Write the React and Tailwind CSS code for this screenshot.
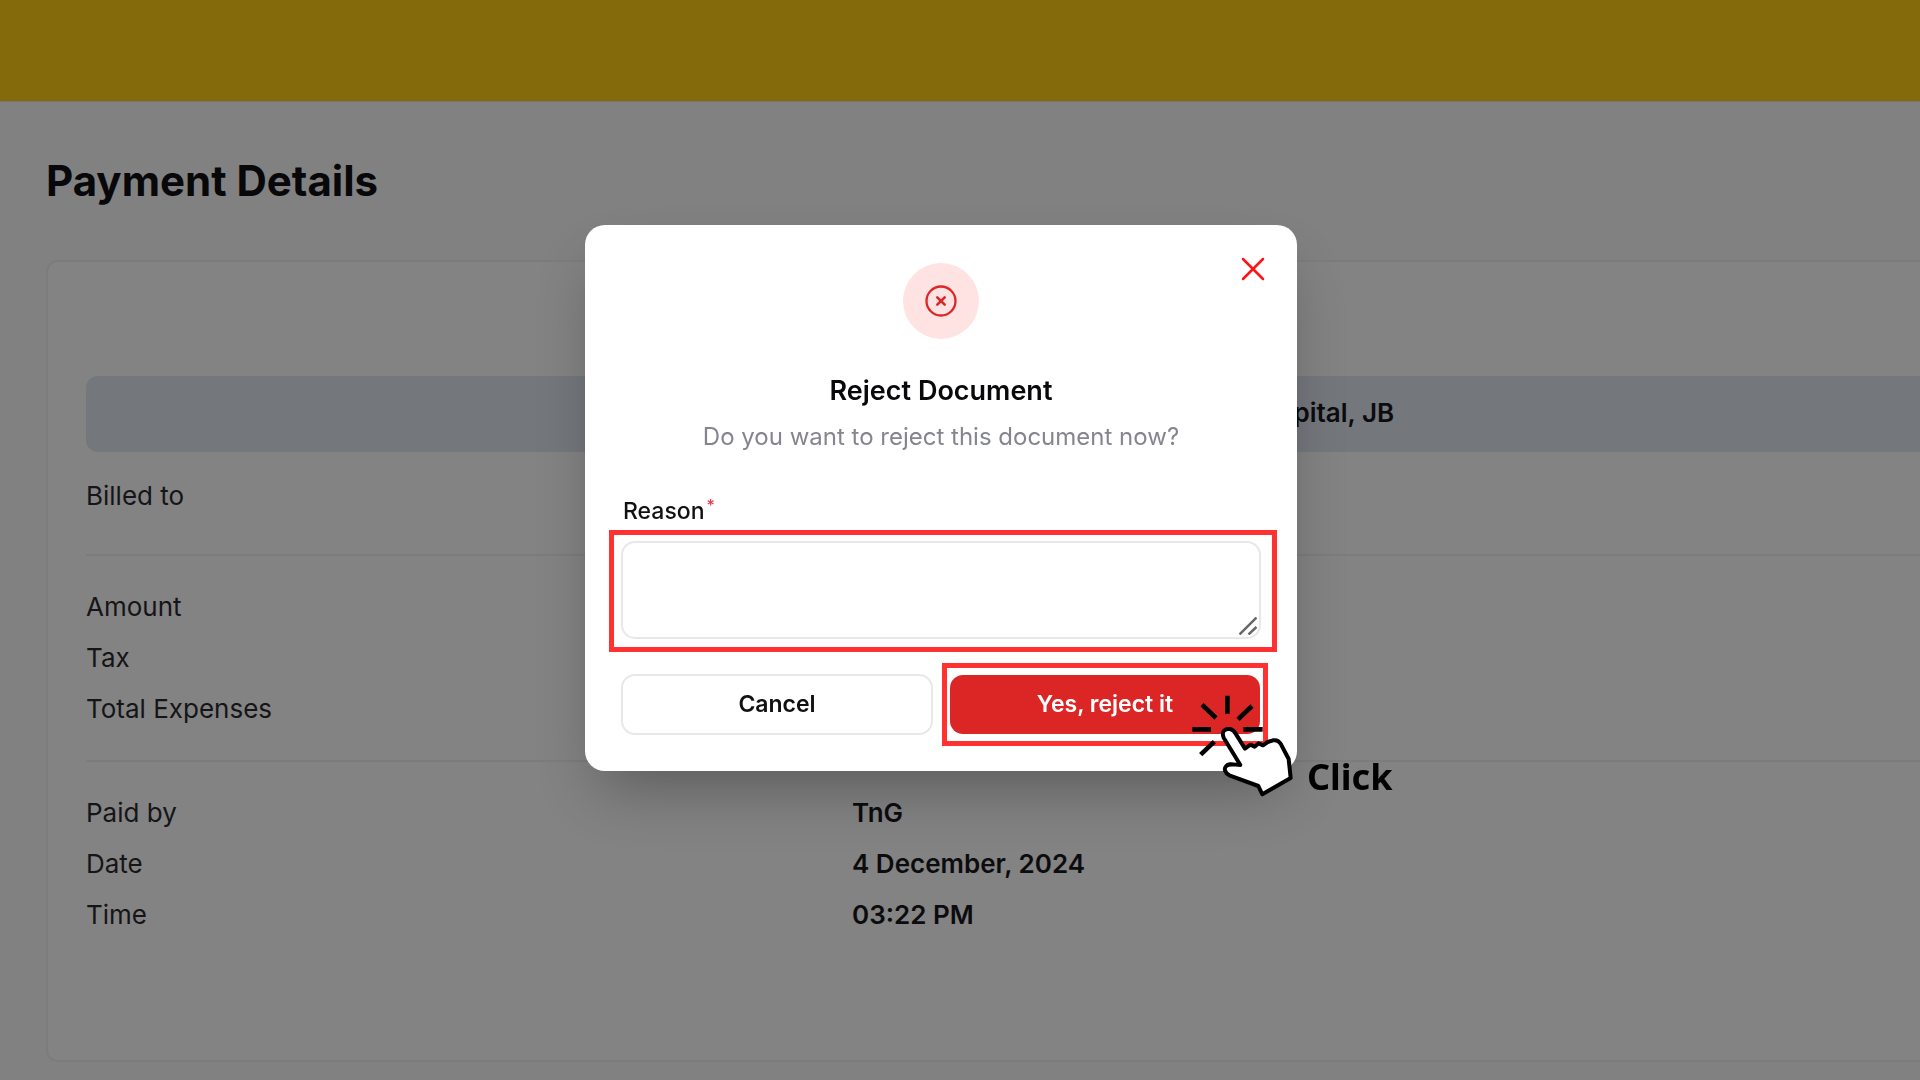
import React from "react";

const sections = [
  [{ label: "Billed to", value: "" }],
  [
    { label: "Amount", value: "" },
    { label: "Tax", value: "" },
    { label: "Total Expenses", value: "" },
  ],
  [
    { label: "Paid by", value: "TnG" },
    { label: "Date", value: "4 December, 2024" },
    { label: "Time", value: "03:22 PM" },
  ],
];

function DetailRows({ rows }) {
  return (
    <dl className="flex flex-col gap-[11px]">
      {rows.map((row) => (
        <div key={row.label} className="grid grid-cols-[766px_1fr] leading-10">
          <dt>{row.label}</dt>
          <dd className="font-semibold text-[#0c0c0f]">{row.value}</dd>
        </div>
      ))}
    </dl>
  );
}

function CircleXIcon() {
  return (
    <svg className="size-8" viewBox="0 0 32 32" fill="none" stroke="currentColor" strokeWidth="2.3" aria-hidden="true">
      <circle cx="16" cy="16" r="14.5" />
      <path d="M12.3 12.3l7.4 7.4M19.7 12.3l-7.4 7.4" strokeWidth="2.6" strokeLinecap="round" />
    </svg>
  );
}

function ResizeGrip() {
  return (
    <svg className="pointer-events-none absolute right-1 bottom-1 size-[18px]" viewBox="0 0 18 18" stroke="#666" strokeWidth="2.4" aria-hidden="true">
      <path d="M0.5 17.5L17.5 0.5M9.5 17.5L17.5 10" />
    </svg>
  );
}

function ClickHand() {
  return (
    <svg className="pointer-events-none h-[102px] w-[103px] shrink-0" viewBox="68 46 309 306" aria-hidden="true">
      <g stroke="#000" strokeWidth="14">
        <path d="M174 48V102M98 75L140 115M248 79L206 119M69 149H125M222 149H280M135 186L94 225" />
      </g>
      <path
        d="M163 174C155 153 168 147 181 148C190 149 195 155 199 162L227 207L243 195L256 201L268 191L281 197L295 187L311 182C323 180 331 187 335 194L358 238L364 295L279 344L267 319L180 287C167 280 163 267 170 260C178 250 193 255 213 256Z"
        fill="#fff"
        stroke="#000"
        strokeWidth="12"
        strokeLinejoin="round"
      />
    </svg>
  );
}

function RejectDialog() {
  return (
    <div className="fixed inset-0 flex items-center justify-center pr-[38px] pb-[85px]">
      <section
        role="dialog"
        aria-modal="true"
        aria-labelledby="reject-title"
        className="relative flex w-full max-w-[712px] flex-col rounded-[20px] bg-white px-9 pt-[38px] pb-9 shadow-[0_30px_60px_-14px_rgba(0,0,0,0.3)]"
      >
        <button type="button" aria-label="Close" className="absolute top-8 right-8 text-[#ff1414]">
          <svg className="size-6" viewBox="0 0 24 24" fill="none" stroke="currentColor" strokeWidth="2.5" strokeLinecap="round" aria-hidden="true">
            <path d="M2 2l20 20M22 2L2 22" />
          </svg>
        </button>

        <div className="flex flex-col items-center text-center">
          <div className="flex size-[76px] items-center justify-center rounded-full bg-red-100 text-[#dc2626]">
            <CircleXIcon />
          </div>
          <h2 id="reject-title" className="mt-8 text-[27px] leading-10 font-semibold text-[#09090b]">
            Reject Document
          </h2>
          <p className="mt-2 text-[24px] leading-9 text-[#858590]">Do you want to reject this document now?</p>
        </div>

        <form className="mt-[38px]">
          <label htmlFor="reason" className="flex h-9 items-start pl-[2px] text-[23px] leading-9 font-medium text-[#111114]">
            Reason
            <span className="ml-[2px] text-[16px] leading-6 text-[#e5384d]">*</span>
          </label>
          <div className="relative mt-3 h-[98px]">
            <textarea
              id="reason"
              className="block size-full resize-none rounded-[14px] border-2 border-[#e8e8ea] bg-white px-4 py-3 text-[22px] outline-none"
            />
            <ResizeGrip />
            <div className="pointer-events-none absolute -top-[11px] -right-4 -bottom-[13px] -left-3 border-5 border-[#ff3131]" />
          </div>

          <div className="mt-[35px] grid h-[61px] grid-cols-2 gap-4 text-[23px] font-semibold">
            <button type="button" className="rounded-[14px] border-2 border-[#e8e8ea] bg-white text-[#111114]">
              Cancel
            </button>
            <div className="relative grid">
              <button type="button" className="rounded-[14px] border border-transparent bg-[#dc2626] bg-clip-padding text-white">
                Yes, reject it
              </button>
              <div className="pointer-events-none absolute -inset-x-[7px] -inset-y-[11px] border-5 border-[#ff3131]" />
              <div className="pointer-events-none absolute top-[21px] left-[243px] flex items-end">
                <ClickHand />
                <span className="ml-3 font-['Noto_Sans',sans-serif] text-[36px] leading-10 font-bold text-black">
                  Click
                </span>
              </div>
            </div>
          </div>
        </form>
      </section>
    </div>
  );
}

export default function App() {
  return (
    <div className="min-h-screen overflow-hidden bg-[#818181] font-['Inter','Noto_Sans',sans-serif]">
      <header className="h-[102px] border-b border-[#767676] bg-[#846a0a]" />
      <main className="pt-[51px] pb-[18px] pl-[46px]">
        <h1 className="text-[42px] leading-[56px] font-bold text-[#08080a]">Payment Details</h1>
        <div className="mt-[51px] h-[802px] rounded-l-xl border-2 border-r-0 border-[#7c7c7d] bg-[#838383] pt-[114px] pl-[38px] text-[26px] text-[#151518]">
          <div className="flex h-[76px] items-center rounded-l-xl bg-[#74777c] pb-1 pl-[1158px] font-semibold text-[#0c0c0f]">
            Hospital, JB
          </div>
          <div className="divide-y-2 divide-[#7c7c7d] pt-6">
            {sections.map((rows, i) => (
              <div key={i} className="pt-[31px] pb-[31px] first:pt-0 first:pb-[38px]">
                <DetailRows rows={rows} />
              </div>
            ))}
          </div>
        </div>
      </main>
      <RejectDialog />
    </div>
  );
}
